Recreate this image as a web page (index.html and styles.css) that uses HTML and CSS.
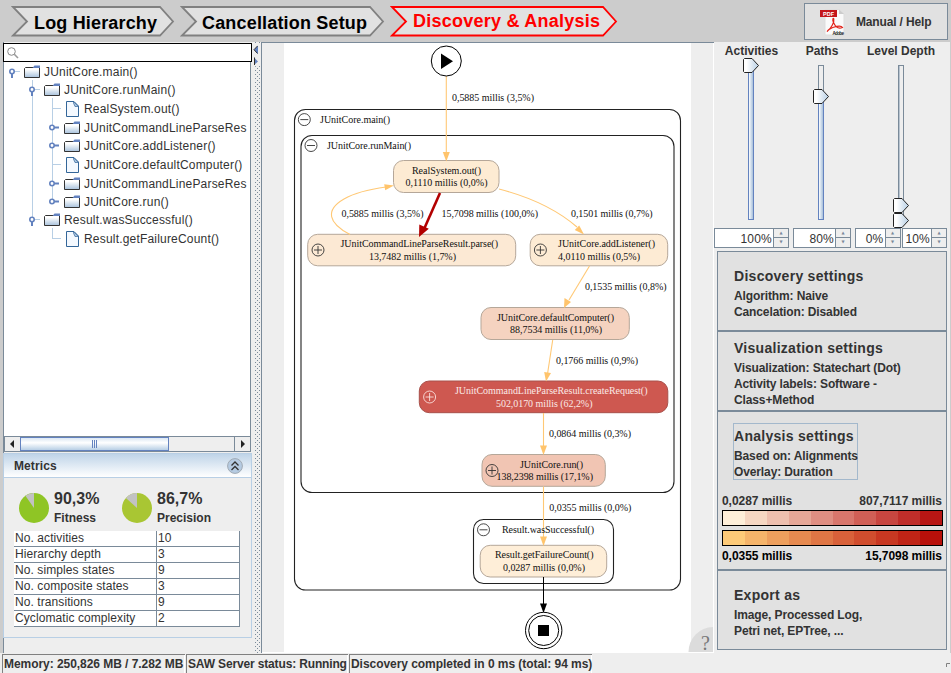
FILE: index.html
```html
<!DOCTYPE html>
<html lang="en">
<head>
    <meta charset="UTF-8">
    <meta name="viewport" content="width=device-width, initial-scale=1.0">
    <title>Discovery &amp; Analysis</title>
    <link rel="stylesheet" href="styles.css">
</head>
<body>
    <!-- Shared icons -->
    <svg class="defs" width="0" height="0">
        <defs>
            <linearGradient id="folder-fill" x1="0" y1="0" x2="0" y2="1">
                <stop offset="0.2" stop-color="#fff"/>
                <stop offset="1" stop-color="#a8c2dc"/>
            </linearGradient>
            <linearGradient id="thumb-fill" x1="0" y1="0" x2="1" y2="0">
                <stop offset="0.2" stop-color="#fff"/>
                <stop offset="1" stop-color="#b8cfe5"/>
            </linearGradient>
            <linearGradient id="track-fill" x1="0" y1="0" x2="1" y2="0">
                <stop offset="0.2" stop-color="#f0f5fa"/>
                <stop offset="1" stop-color="#9db8d5"/>
            </linearGradient>
            <symbol id="folder" viewBox="0 0 16 18">
                <path d="M0.5 5.5 L1.5 4.5 H15.5 V14.5 H0.5 Z" fill="url(#folder-fill)" stroke="#333"/>
                <path d="M8.5 5 L10.5 2.5 H16 V5 Z" fill="#6382bf"/>
            </symbol>
            <symbol id="leaf" viewBox="0 0 16 20">
                <path d="M2.5 2.5 H10 L14.5 7 V17.5 H2.5 Z" fill="#f4f9ff" stroke="#336699"/>
                <path d="M9.5 2.5 V4 L11 7.5 H14.5 Z" fill="#a8c4e0" stroke="#336699" stroke-width="0.7"/>
            </symbol>
            <symbol id="opened" viewBox="0 0 16 18">
                <path d="M6 8.5 H12" stroke="#b8cfe5"/>
                <circle cx="4" cy="8.5" r="2.2" fill="#fff" stroke="#6382bf" stroke-width="1.6"/>
                <path d="M4 10.5 V15" stroke="#6382bf" stroke-width="2"/>
            </symbol>
            <symbol id="closed" viewBox="0 0 16 18">
                <circle cx="4" cy="8.5" r="2.2" fill="#fff" stroke="#6382bf" stroke-width="1.6"/>
                <path d="M6 8.5 H11" stroke="#6382bf" stroke-width="2"/>
            </symbol>
            <symbol id="dash" viewBox="0 0 16 20">
                <path d="M4 9.5 H13" stroke="#b8cfe5"/>
            </symbol>
            <symbol id="thumb" viewBox="0 0 16 15">
                <path d="M1.5 0.5 H9 L15.5 7.5 L9 14.5 H1.5 L0.5 13.5 V1.5 Z" fill="url(#thumb-fill)" stroke="#222"/>
            </symbol>
            <symbol id="minus" viewBox="-7 -7 14 14">
                <circle r="6" fill="none" stroke="currentColor" stroke-width="0.9"/>
                <path d="M-4 0 H4" stroke="currentColor" stroke-width="0.9"/>
            </symbol>
            <symbol id="plus" viewBox="-7 -7 14 14">
                <circle r="6" fill="none" stroke="currentColor" stroke-width="0.9"/>
                <path d="M-4 0 H4 M0 -4 V4" stroke="currentColor" stroke-width="0.9"/>
            </symbol>
        </defs>
    </svg>

    <header class="toolbar">
        <nav class="steps">
            <svg class="step" width="164" height="42">
                <path d="M2 7 H149 L162 21.5 L149 35.5 H2 L16 21.5 Z"/>
                <text x="23" y="28.5" textLength="123">Log Hierarchy</text>
            </svg>
            <svg class="step" width="205" height="42">
                <path d="M2 7 H190 L203 21.5 L190 35.5 H2 L16 21.5 Z"/>
                <text x="22" y="28.5" textLength="165">Cancellation Setup</text>
            </svg>
            <svg class="step active" width="228" height="42">
                <path d="M2 7 H213 L226 21.5 L213 35.5 H2 L16 21.5 Z"/>
                <text x="23" y="27" textLength="187">Discovery &amp; Analysis</text>
            </svg>
        </nav>
        <button class="help-button">
            <svg width="26" height="28" viewBox="0 0 26 28">
                <path d="M6 1.5 H20 L25 6 V27 H6 Z" fill="#fafafa" stroke="#ddd"/>
                <path d="M20 1.5 V6 H25 Z" fill="#ccc"/>
                <rect x="1" y="2" width="17" height="7" fill="#c4161c"/>
                <text class="pdf-label" x="4" y="7.5">PDF</text>
                <path d="M8.5 23 C12 20.5 15.5 14 14.8 11 C14.3 9.5 13 11 14.5 14.5 C16.5 19 20 21 23.5 19.5 C22 17 14.5 18.5 10 21.5 C8.5 22.5 8 24 8.5 23 Z" fill="none" stroke="#e2231a" stroke-width="1.2"/>
                <text class="adobe-label" x="13.5" y="26.5" textLength="11.5">Adobe</text>
            </svg>
            <span>Manual / Help</span>
        </button>
    </header>

    <main>
        <aside class="left-panel">
            <div class="search">
                <svg width="12" height="12" viewBox="0 0 12 12"><circle cx="4.5" cy="4.5" r="3.8" fill="none" stroke="#888"/><path d="M7.3 7.3 L11 11" stroke="#999" stroke-width="1.6"/></svg>
            </div>
            <div class="tree">
                <ul>
                    <li>
                        <div class="node"><svg><use href="#opened"/></svg><svg><use href="#folder"/></svg><span>JUnitCore.main()</span></div>
                        <ul class="guide guide-main">
                            <li>
                                <div class="node"><svg><use href="#opened"/></svg><svg><use href="#folder"/></svg><span>JUnitCore.runMain()</span></div>
                                <ul class="guide guide-run">
                                    <li class="node leaf"><svg><use href="#dash"/></svg><svg><use href="#leaf"/></svg><span>RealSystem.out()</span></li>
                                    <li class="node"><svg><use href="#closed"/></svg><svg><use href="#folder"/></svg><span>JUnitCommandLineParseRes</span></li>
                                    <li class="node"><svg><use href="#closed"/></svg><svg><use href="#folder"/></svg><span>JUnitCore.addListener()</span></li>
                                    <li class="node leaf"><svg><use href="#dash"/></svg><svg><use href="#leaf"/></svg><span>JUnitCore.defaultComputer()</span></li>
                                    <li class="node"><svg><use href="#closed"/></svg><svg><use href="#folder"/></svg><span>JUnitCommandLineParseRes</span></li>
                                    <li class="node"><svg><use href="#closed"/></svg><svg><use href="#folder"/></svg><span>JUnitCore.run()</span></li>
                                </ul>
                            </li>
                            <li>
                                <div class="node"><svg><use href="#opened"/></svg><svg><use href="#folder"/></svg><span>Result.wasSuccessful()</span></div>
                                <ul class="guide guide-result">
                                    <li class="node leaf"><svg><use href="#dash"/></svg><svg><use href="#leaf"/></svg><span>Result.getFailureCount()</span></li>
                                </ul>
                            </li>
                        </ul>
                    </li>
                </ul>
            </div>
            <div class="scrollbar">
                <svg class="scroll-arrow" viewBox="0 0 15 14"><path d="M9 3 V11 L5 7 Z" fill="#222"/></svg>
                <div class="scroll-thumb"><i></i><i></i><i></i></div>
                <div class="scroll-track"></div>
                <svg class="scroll-arrow" viewBox="0 0 15 14"><path d="M6 3 V11 L10 7 Z" fill="#222"/></svg>
            </div>
            <section class="metrics">
                <div class="metrics-header">
                    <h2>Metrics</h2>
                    <svg width="16" height="16" viewBox="0 0 16 16">
                        <circle cx="8" cy="8" r="7.4" fill="#b5cbe2" stroke="#a0aab4"/>
                        <path d="M4.5 7.5 L8 4 L11.5 7.5 M4.5 12 L8 8.5 L11.5 12" fill="none" stroke="#333" stroke-width="1.3"/>
                    </svg>
                </div>
                <div class="scores">
                    <div class="score">
                        <svg width="30" height="30" viewBox="-15 -15 30 30"><circle r="15" fill="#8fc525"/><path d="M0 0 V-15 A15 15 0 0 0 -8.6 -12.3 Z" fill="#c2c2c2"/></svg>
                        <p><strong>90,3%</strong><br>Fitness</p>
                    </div>
                    <div class="score">
                        <svg width="30" height="30" viewBox="-15 -15 30 30"><circle r="15" fill="#a9c633"/><path d="M0 0 V-15 A15 15 0 0 0 -11.1 -10.1 Z" fill="#c2c2c2"/></svg>
                        <p><strong>86,7%</strong><br>Precision</p>
                    </div>
                </div>
                <table>
                    <tr><td>No. activities</td><td>10</td></tr>
                    <tr><td>Hierarchy depth</td><td>3</td></tr>
                    <tr><td>No. simples states</td><td>9</td></tr>
                    <tr><td>No. composite states</td><td>3</td></tr>
                    <tr><td>No. transitions</td><td>9</td></tr>
                    <tr><td>Cyclomatic complexity</td><td>2</td></tr>
                </table>
            </section>
        </aside>

        <div class="splitter">
            <svg width="9" height="22" viewBox="0 0 9 22"><path d="M6 2.5 V11 L2 6.7 Z" fill="#6382bf"/><path d="M5.5 3 L2 6.7 L5.5 10.5" fill="none" stroke="#333"/><path d="M2 14.5 V22 L6 18.5 Z" fill="#6382bf"/><path d="M2.5 14.5 V22" stroke="#333"/></svg>
        </div>

        <section class="canvas">
            <svg class="graph" width="452" height="609" viewBox="262 43 452 609">
                <rect x="284" y="43" width="407" height="609" fill="#fff"/>

                <!-- Composite states -->
                <g class="frame">
                    <rect x="294.5" y="109.5" width="386" height="480.5" rx="11"/>
                    <rect x="301" y="135.5" width="373" height="357" rx="11"/>
                    <rect x="473.5" y="519.5" width="140" height="64" rx="10"/>
                </g>

                <!-- Simple states -->
                <g class="state">
                    <rect x="393.5" y="160.5" width="105.5" height="32" rx="10" fill="#fdebd3"/>
                    <rect x="307.7" y="234.3" width="208" height="31.5" rx="10" fill="#fce9d4"/>
                    <rect x="530.2" y="234.3" width="137.5" height="31.5" rx="10" fill="#fdebd4"/>
                    <rect x="481" y="307.5" width="148.3" height="32" rx="10" fill="#f5d3c0"/>
                    <rect x="419.3" y="381" width="248.5" height="31.7" rx="10" fill="#ce5850" class="hot"/>
                    <rect x="482" y="454.5" width="123.3" height="31.8" rx="10" fill="#f1c5b3"/>
                    <rect x="480.2" y="545.3" width="126.5" height="31.7" rx="10" fill="#feeed8"/>
                </g>

                <!-- Transitions -->
                <g class="edge">
                    <path d="M446.3 76 V153"/>
                    <path d="M350 234.5 C328 223 325 210 344 199 C356 192 371 189 386 187"/>
                    <path d="M499 189 C530 197 555 208 577 227"/>
                    <path d="M589.5 266 L569 300"/>
                    <path d="M552.7 340 L547.5 374"/>
                    <path d="M543.5 413 V446"/>
                    <path d="M543.5 486.5 V538"/>
                </g>
                <g class="arrow">
                    <path d="M446.3 161.5 L442.8 152 H449.8 Z"/>
                    <path d="M394 185.5 L384.2 184.2 L385.2 190.3 Z"/>
                    <path d="M584 234.5 L574.8 230 L579.2 225.5 Z"/>
                    <path d="M564 308 L564.5 298 L571 302 Z"/>
                    <path d="M546 381.5 L544.2 372 L551 373 Z"/>
                    <path d="M543.5 455 L540 445.5 H547 Z"/>
                    <path d="M543.5 546 L540 536.5 H547 Z"/>
                </g>
                <path d="M440 193 L424.5 228" stroke="#b20000" stroke-width="2.6"/>
                <path d="M419 237 L419.3 224.5 L428.8 228.7 Z" fill="#b20000"/>
                <path d="M543.5 577 V605" stroke="#000"/>
                <path d="M543.5 613 L540 603.5 H547 Z"/>

                <!-- Start and end -->
                <circle cx="446.3" cy="61" r="15" fill="#fff" stroke="#000"/>
                <path d="M441 53.5 V69 L453 61.3 Z"/>
                <circle cx="543.7" cy="630.5" r="18.2" fill="#fff" stroke="#000"/>
                <circle cx="543.7" cy="630.5" r="15" fill="#fff" stroke="#000"/>
                <rect x="538" y="625" width="11" height="11"/>

                <!-- Expand and collapse handles -->
                <g class="toggles">
                    <use href="#minus" x="297.3" y="112.6" width="14" height="14"/>
                    <use href="#minus" x="304" y="138.5" width="14" height="14"/>
                    <use href="#minus" x="476.5" y="522.8" width="14" height="14"/>
                    <use href="#plus" x="311" y="243" width="14" height="14"/>
                    <use href="#plus" x="533.4" y="243" width="14" height="14"/>
                    <use href="#plus" x="422.6" y="390" width="14" height="14" class="light"/>
                    <use href="#plus" x="485" y="463.5" width="14" height="14"/>
                </g>

                <g class="labels">
                    <text x="320" y="122.5" textLength="70">JUnitCore.main()</text>
                    <text x="327" y="148.5" textLength="84">JUnitCore.runMain()</text>
                    <text x="502" y="533" textLength="92">Result.wasSuccessful()</text>
                    <text x="412" y="174" textLength="69">RealSystem.out()</text>
                    <text x="405.5" y="186" textLength="82">0,1110 millis (0,0%)</text>
                    <text x="340.5" y="247.3" textLength="157.5">JUnitCommandLineParseResult.parse()</text>
                    <text x="369" y="260" textLength="87">13,7482 millis (1,7%)</text>
                    <text x="558" y="247.3" textLength="97">JUnitCore.addListener()</text>
                    <text x="558" y="260" textLength="82">4,0110 millis (0,5%)</text>
                    <text x="497" y="321" textLength="117">JUnitCore.defaultComputer()</text>
                    <text x="510" y="333" textLength="92">88,7534 millis (11,0%)</text>
                    <text x="455" y="394.3" textLength="192.5" class="light">JUnitCommandLineParseResult.createRequest()</text>
                    <text x="496" y="406.5" textLength="96.5" class="light">502,0170 millis (62,2%)</text>
                    <text x="520" y="467.8" textLength="63">JUnitCore.run()</text>
                    <text x="496.5" y="480" textLength="96.5">138,2398 millis (17,1%)</text>
                    <text x="495" y="558.3" textLength="98.5">Result.getFailureCount()</text>
                    <text x="503" y="571" textLength="82">0,0287 millis (0,0%)</text>
                    <text x="452" y="100.5" textLength="82">0,5885 millis (3,5%)</text>
                    <text x="341.5" y="217" textLength="82">0,5885 millis (3,5%)</text>
                    <text x="441.5" y="217" textLength="96.5">15,7098 millis (100,0%)</text>
                    <text x="571" y="217" textLength="81.5">0,1501 millis (0,7%)</text>
                    <text x="585" y="290" textLength="81.5">0,1535 millis (0,8%)</text>
                    <text x="556" y="363.7" textLength="82">0,1766 millis (0,9%)</text>
                    <text x="549" y="437" textLength="82">0,0864 millis (0,3%)</text>
                    <text x="549.3" y="510.5" textLength="82">0,0355 millis (0,0%)</text>
                </g>

                <path d="M688.5 652 A25 25 0 0 1 713 627 V652 Z" fill="#dcdcdc"/>
                <text class="question" x="701" y="649.5" textLength="8.5">?</text>
            </svg>
        </section>

        <aside class="right-panel">
            <div class="sliders">
                <div class="slider">
                    <h3>Activities</h3>
                    <svg width="75" height="171" viewBox="714 57 75 171">
                        <rect x="748.5" y="65.5" width="5" height="154" fill="url(#track-fill)" stroke="#6382bf"/>
                        <use href="#thumb" x="743" y="58" width="16" height="15"/>
                    </svg>
                    <div class="spinners">
                        <div class="spinner"><span>100%</span><i><b>▲</b><b>▼</b></i></div>
                    </div>
                </div>
                <div class="slider">
                    <h3>Paths</h3>
                    <svg width="58" height="171" viewBox="793 57 58 171">
                        <rect x="818.5" y="65.5" width="5" height="40" fill="#eee" stroke="#7a8a99"/>
                        <rect x="818.5" y="96.5" width="5" height="123" fill="url(#track-fill)" stroke="#6382bf"/>
                        <use href="#thumb" x="813" y="89" width="16" height="15"/>
                    </svg>
                    <div class="spinners">
                        <div class="spinner"><span>80%</span><i><b>▲</b><b>▼</b></i></div>
                    </div>
                </div>
                <div class="slider">
                    <h3>Level Depth</h3>
                    <svg width="92" height="171" viewBox="855 57 92 171">
                        <rect x="898.5" y="65.5" width="5" height="154" fill="#eee" stroke="#7a8a99"/>
                        <path d="M899.5 66 V219" stroke="#b8c4d0"/>
                        <use href="#thumb" x="893" y="213" width="16" height="15"/>
                        <use href="#thumb" x="893" y="198" width="16" height="15"/>
                    </svg>
                    <div class="spinners">
                        <div class="spinner"><span>0%</span><i><b>▲</b><b>▼</b></i></div>
                        <div class="spinner"><span>10%</span><i><b>▲</b><b>▼</b></i></div>
                    </div>
                </div>
            </div>

            <div class="cards">
                <section class="card discovery">
                    <h2>Discovery settings</h2>
                    <p>Algorithm: Naive<br>Cancelation: Disabled</p>
                </section>
                <section class="card visualization">
                    <h2>Visualization settings</h2>
                    <p>Visualization: Statechart (Dot)<br>Activity labels: Software -<br>Class+Method</p>
                </section>
                <section class="card analysis">
                    <div class="focused">
                        <h2>Analysis settings</h2>
                        <p>Based on: Alignments<br>Overlay: Duration</p>
                    </div>
                    <div class="legend">
                        <div class="range"><span>0,0287 millis</span><span>807,7117 millis</span></div>
                        <div class="ramp states"><i></i><i></i><i></i><i></i><i></i><i></i><i></i><i></i><i></i><i></i></div>
                        <div class="ramp arcs"><i></i><i></i><i></i><i></i><i></i><i></i><i></i><i></i><i></i><i></i></div>
                        <div class="range dark"><span>0,0355 millis</span><span>15,7098 millis</span></div>
                    </div>
                </section>
                <section class="card export">
                    <h2>Export as</h2>
                    <p>Image, Processed Log,<br>Petri net, EPTree, ...</p>
                </section>
            </div>
        </aside>
    </main>

    <footer class="status">
        <span class="memory">Memory: 250,826 MB / 7.282 MB</span>
        <span class="server">SAW Server status: Running</span>
        <span class="result">Discovery completed in 0 ms (total: 94 ms)</span>
        <svg class="grip" width="5" height="5"><path d="M0.5 4 V0.5 H4" fill="none" stroke="#808080"/></svg>
    </footer>
</body>
</html>
```

FILE: styles.css
```css
* {
    box-sizing: border-box;
}

body {
    margin: 0;
    width: 951px;
    height: 673px;
    display: flex;
    flex-direction: column;
    overflow: hidden;
    background-color: #eee;
    color: #333;
    font-family: "Liberation Sans", Arial, sans-serif;
    font-size: 12px;
}

h2, h3, p, ul {
    margin: 0;
    padding: 0;
}

svg {
    display: block;
    flex-shrink: 0;
}

.defs {
    position: absolute;
}

/* Toolbar */
.toolbar {
    height: 42px;
    flex-shrink: 0;
    display: flex;
    justify-content: space-between;
    align-items: flex-start;
    background-color: #ccc;
    padding-right: 3px;
}

.steps {
    display: flex;
    gap: 5px;
    padding-left: 11px;
}

.step path {
    fill: #e1e1e1;
    stroke: #808080;
    stroke-width: 1.8;
}

.step text {
    font-size: 18px;
    font-weight: bold;
    fill: #000;
}

.step.active path {
    stroke: #f00;
}

.step.active text {
    fill: #f00;
}

.help-button {
    width: 144px;
    height: 37px;
    margin-top: 3px;
    padding: 0 0 0 14px;
    display: flex;
    align-items: center;
    gap: 11px;
    border: 1px solid #7a8a99;
    background-color: #e1e1e1;
    color: #333;
    font: bold 12px "Liberation Sans", Arial, sans-serif;
    white-space: nowrap;
}

.help-button span {
    letter-spacing: -0.15px;
}

.pdf-label {
    font-size: 5.5px;
    font-weight: bold;
    fill: #fff;
}

.adobe-label {
    font-size: 4.5px;
    font-weight: bold;
    fill: #222;
}

main {
    display: flex;
    height: 611px;
    flex-shrink: 0;
}

/* Left panel */
.left-panel {
    width: 252px;
    border-left: 3px solid #ccc;
    display: flex;
    flex-direction: column;
    box-shadow: inset 1px 0 #7a8a99;
}

.search {
    height: 19px;
    margin-top: 1px;
    padding: 3px;
    border: 1px solid #000;
    background-color: #fff;
}

.tree {
    height: 375px;
    margin-right: 1px;
    padding: 1px 0 0 4px;
    border: 1px solid #7a8a99;
    border-width: 0 1px 1px;
    background-color: #fff;
    overflow: hidden;
    font-size: 12px;
    letter-spacing: 0.19px;
}

.tree ul {
    list-style: none;
}

.guide {
    position: relative;
    margin-left: 20px;
}

.guide::before {
    content: "";
    position: absolute;
    left: 4px;
    top: -1px;
    width: 1px;
    background-color: #b8cfe5;
}

.guide-main::before {
    height: 138px;
}

.guide-run::before {
    height: 104px;
}

.guide-result::before {
    height: 11px;
}

.node {
    position: relative;
    display: flex;
    align-items: center;
    height: 18px;
    white-space: nowrap;
}

.node svg {
    width: 16px;
    height: 18px;
}

.node span {
    margin-left: 4px;
}

.node.leaf, .leaf svg {
    height: 20px;
}

.scrollbar {
    height: 15px;
    display: flex;
    margin: 0 1px;
    border: 1px solid #7a8a99;
    border-top: none;
}

.scroll-arrow {
    width: 15px;
    height: 14px;
}

.scroll-thumb {
    width: 149px;
    display: flex;
    justify-content: center;
    align-items: center;
    gap: 1px;
    border: 1px solid #6382bf;
    background: linear-gradient(#dce8f4, #fff 40%, #b8cfe5);
}

.scroll-thumb i {
    width: 1px;
    height: 8px;
    background-color: #6382bf;
}

.scroll-track {
    flex: 1;
    border-right: 1px solid #7a8a99;
}

.metrics {
    height: 185px;
    margin-top: 1px;
    border: 1px solid #b8cfe5;
}

.metrics-header {
    height: 24px;
    display: flex;
    justify-content: space-between;
    align-items: center;
    padding: 0 8px 0 10px;
    border-bottom: 1px solid #b8cfe5;
    background: linear-gradient(#bfd4e8, #fff);
}

.metrics-header h2 {
    font-size: 12px;
    letter-spacing: 0.1px;
}

.scores {
    display: flex;
    gap: 22px;
    padding: 12px 0 0 15px;
    height: 53px;
}

.score {
    display: flex;
    gap: 5px;
    width: 81px;
    font-weight: bold;
    line-height: 18px;
    white-space: nowrap;
}

.score svg {
    margin-top: 3px;
}

.score strong {
    font-size: 16px;
}

.metrics table {
    width: 226px;
    margin-left: 10px;
    border-collapse: separate;
    border-spacing: 0;
    background-color: #fff;
    letter-spacing: 0.08px;
}

.metrics td {
    height: 16px;
    padding: 0 1px;
    border: 1px solid #7a8a99;
    border-width: 0 1px 1px 0;
    line-height: 15px;
}

.metrics td:first-child {
    width: 143px;
}

.splitter {
    width: 9px;
    height: 611px;
    padding-top: 1px;
    background: linear-gradient(#8a9cae, #8a9cae) 3px 24px / 1px 1px no-repeat,
        radial-gradient(circle at 0.5px 0.5px, #7a8a99 0.6px, transparent 0.7px) 3px 0 / 4px 4px,
        radial-gradient(circle at 0.5px 0.5px, #7a8a99 0.6px, transparent 0.7px) 5px 2px / 4px 4px,
        #eee;
    box-shadow: inset 3px 0 #eee, inset -1px 0 #eee;
}

.splitter svg {
    background-color: #eee;
}

/* Canvas */
.canvas {
    width: 453px;
    border: 1px solid #7a8a99;
    border-width: 1px 0 0 1px;
    box-shadow: inset -1px -1px #fff;
}

.frame rect {
    fill: none;
    stroke: #222;
    stroke-width: 1.1;
}

.state rect {
    stroke: #b5a799;
}

.state .hot {
    stroke: #a8504a;
}

.edge path {
    fill: none;
    stroke: #ffc875;
    stroke-width: 1.1;
}

.arrow {
    fill: #ffc46c;
}

.toggles {
    color: #333;
}

.toggles .light {
    color: #fbe0dc;
}

.labels text {
    font-family: "Liberation Serif", "Times New Roman", serif;
    font-size: 10px;
    fill: #111;
}

.labels .light {
    fill: #fbe9e6;
}

.question {
    font: 20px "Liberation Serif", serif;
    fill: #777;
}

/* Right panel */
.right-panel {
    width: 237px;
    padding-right: 3px;
    box-shadow: inset -1px 0 #ccc;
}

.sliders {
    display: flex;
    gap: 4px;
}

.slider h3 {
    height: 15px;
    padding-top: 2px;
    font-size: 12px;
    line-height: 14px;
    text-align: center;
    white-space: nowrap;
}

.spinners {
    display: flex;
    gap: 1px;
}

.spinner {
    flex: 1;
    height: 20px;
    display: flex;
    border: 1px solid #7a8a99;
    background-color: #fff;
}

.spinner span {
    flex: 1;
    padding-right: 1px;
    line-height: 20px;
    letter-spacing: 0.2px;
    text-align: right;
}

.spinner i {
    width: 15px;
    display: flex;
    flex-direction: column;
    border-left: 1px solid #7a8a99;
    background-color: #eee;
}

.spinner b {
    height: 9px;
    color: #7a8a99;
    font: 4px/8px "DejaVu Sans", sans-serif;
    text-align: center;
}

.spinner b:first-child {
    border-bottom: 1px solid #7a8a99;
}

.cards {
    width: 230px;
    margin: 3px 0 0 3px;
    border: 1px solid #7a8a99;
    background-color: #e1e1e1;
}

.card {
    padding-left: 16px;
    border-bottom: 2px solid #7a8a99;
    font-weight: bold;
    line-height: 16px;
    white-space: nowrap;
}

.card h2 {
    margin-bottom: 2px;
    font-size: 14px;
    line-height: 20px;
    letter-spacing: 0.28px;
}

.card p {
    letter-spacing: -0.12px;
}

.discovery {
    height: 80px;
    padding-top: 14px;
}

.visualization {
    height: 80px;
    padding-top: 6px;
}

.analysis {
    height: 159px;
    padding: 11px 0 0 4px;
}

.focused {
    width: 125px;
    height: 57px;
    margin-left: 11px;
    padding-top: 2px;
    border: 1px solid #a3b8cc;
}

.legend {
    width: 221px;
    margin-top: 13px;
}

.range {
    display: flex;
    justify-content: space-between;
    padding-right: 1px;
    line-height: 17px;
    letter-spacing: -0.05px;
}

.range.dark {
    color: #000;
    line-height: 20px;
}

.ramp {
    display: flex;
    height: 16px;
    border: 1px solid #000;
}

.ramp i {
    flex: 1;
}

.arcs {
    margin-top: 4px;
}

.states i:nth-child(1) { background-color: #feefd9; }
.states i:nth-child(2) { background-color: #f6d7c2; }
.states i:nth-child(3) { background-color: #eebfae; }
.states i:nth-child(4) { background-color: #e6a797; }
.states i:nth-child(5) { background-color: #df8e82; }
.states i:nth-child(6) { background-color: #d8766c; }
.states i:nth-child(7) { background-color: #d05f56; }
.states i:nth-child(8) { background-color: #c84640; }
.states i:nth-child(9) { background-color: #c02e2a; }
.states i:nth-child(10) { background-color: #b81614; }

.arcs i:nth-child(1) { background-color: #fdca78; }
.arcs i:nth-child(2) { background-color: #f5b46a; }
.arcs i:nth-child(3) { background-color: #ed9f5d; }
.arcs i:nth-child(4) { background-color: #e68a50; }
.arcs i:nth-child(5) { background-color: #df7645; }
.arcs i:nth-child(6) { background-color: #d8613a; }
.arcs i:nth-child(7) { background-color: #d04d2e; }
.arcs i:nth-child(8) { background-color: #c83822; }
.arcs i:nth-child(9) { background-color: #c02416; }
.arcs i:nth-child(10) { background-color: #b8100a; }

.export {
    height: 78px;
    padding-top: 14px;
    border-bottom: none;
}

/* Status bar */
.status {
    height: 20px;
    display: flex;
    gap: 1px;
    padding-left: 2px;
    background-color: #eee;
    font-weight: bold;
    letter-spacing: -0.05px;
}

.status span {
    height: 19px;
    margin-top: 1px;
    padding-left: 1px;
    border: 1px solid #808080;
    border-width: 1px 0 0 1px;
    box-shadow: inset -1px 0 #fff;
    line-height: 18px;
    white-space: nowrap;
}

.memory {
    width: 183px;
}

.server {
    width: 162px;
    letter-spacing: -0.15px;
}

.result {
    width: 243px;
}

.grip {
    margin: 10px 0 0 auto;
}
```
